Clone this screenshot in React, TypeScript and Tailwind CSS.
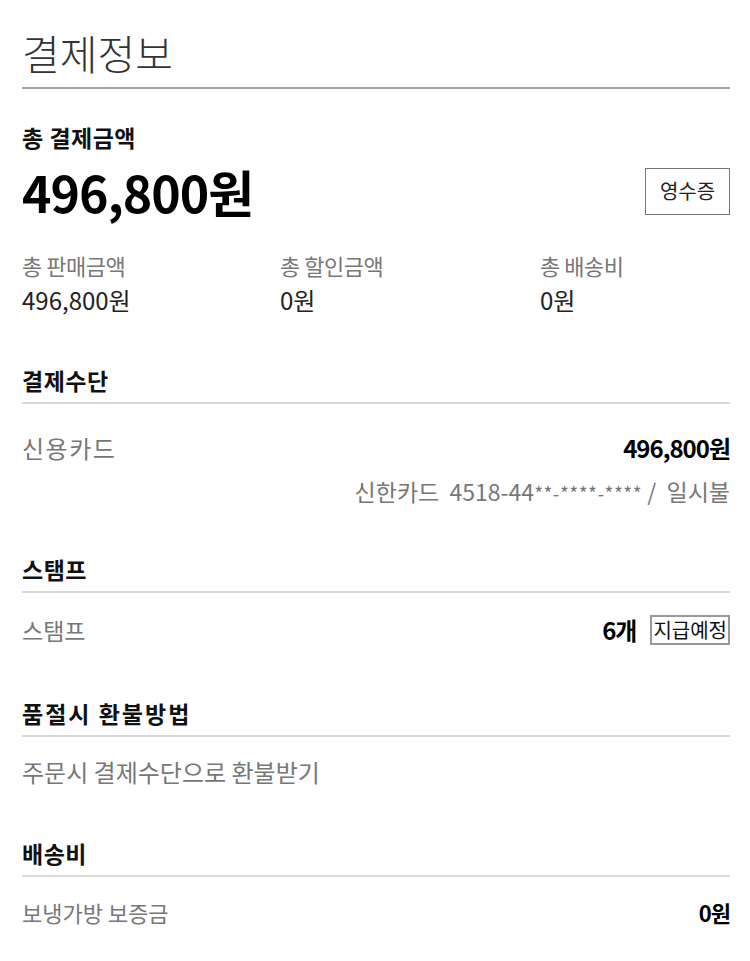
import React from 'react';

const font = { fontFamily: '"Noto Sans CJK KR", "Noto Sans", sans-serif' };

const summary = [
  { label: '총 판매금액', value: '496,800원' },
  { label: '총 할인금액', value: '0원' },
  { label: '총 배송비', value: '0원' },
];

const SectionTitle = ({ children, wide }: { children: React.ReactNode; wide?: boolean }) => (
  <div
    className={`border-b-2 border-[#d9d9d9] pb-[8px] text-[23px] font-bold leading-[28px] text-[#111] ${
      wide ? 'tracking-[2px]' : 'tracking-[0.5px]'
    }`}
  >
    {children}
  </div>
);

export default function App() {
  return (
    <div className="min-h-[961px] bg-white pl-[22px] pr-[20px]" style={font}>
      {/* 헤더 */}
      <div className="border-b-2 border-[#a3a3a3] pt-[31px] pb-[14px] text-[41px] font-light leading-[42px] text-[#333]">
        결제정보
      </div>

      {/* 총 결제금액 */}
      <div className="mt-[34px] text-[23px] font-bold leading-[28px] tracking-[0.5px] text-[#111]">총 결제금액</div>
      <div className="mt-[12px] flex items-center justify-between">
        <div className="text-[50px] font-bold leading-[56px] tracking-[-1px] text-black">496,800원</div>
        <button className="flex h-[47px] w-[85px] items-center justify-center border border-[#777] bg-white text-[20px] text-[#222]">
          영수증
        </button>
      </div>

      <div className="mt-[32px] grid grid-cols-[258px_260px_1fr]">
        {summary.map((s) => (
          <div key={s.label} className="flex flex-col gap-[7px]">
            <span className="text-[22px] leading-[28px] tracking-[-0.5px] text-[#777]">{s.label}</span>
            <span className="text-[24px] leading-[28px] text-[#222]">{s.value}</span>
          </div>
        ))}
      </div>

      {/* 결제수단 */}
      <div className="mt-[52px]">
        <SectionTitle>결제수단</SectionTitle>
        <div className="mt-[30px] flex items-center justify-between leading-[28px]">
          <span className="text-[24px] tracking-[1.5px] text-[#777]">신용카드</span>
          <span className="text-[24px] font-bold tracking-[-1px] text-black">496,800원</span>
        </div>
        <div className="mt-[15px] text-right text-[23px] leading-[28px] text-[#777]">
          신한카드 &nbsp;4518-44<span className="text-[19px] tracking-[0.5px]">**-****-****</span> / &nbsp;일시불
        </div>
      </div>

      {/* 스탬프 */}
      <div className="mt-[48px]">
        <SectionTitle>스탬프</SectionTitle>
        <div className="mt-[22px] flex items-center justify-between leading-[28px]">
          <span className="text-[23px] text-[#777]">스탬프</span>
          <div className="flex items-center gap-[14px]">
            <span className="text-[24px] font-bold tracking-[-1px] text-black">6개</span>
            <span className="border-2 border-[#999] px-[1px] text-[20px] leading-[26px] text-[#111]">지급예정</span>
          </div>
        </div>
      </div>

      {/* 품절시 환불방법 */}
      <div className="mt-[54px]">
        <SectionTitle wide>품절시 환불방법</SectionTitle>
        <div className="mt-[21px] text-[24px] leading-[28px] text-[#777]">주문시 결제수단으로 환불받기</div>
      </div>

      {/* 배송비 */}
      <div className="mt-[53px]">
        <SectionTitle>배송비</SectionTitle>
        <div className="mt-[21px] flex items-center justify-between leading-[28px]">
          <span className="text-[22px] text-[#777]">보냉가방 보증금</span>
          <span className="text-[22px] font-bold tracking-[-1px] text-black">0원</span>
        </div>
      </div>
    </div>
  );
}
